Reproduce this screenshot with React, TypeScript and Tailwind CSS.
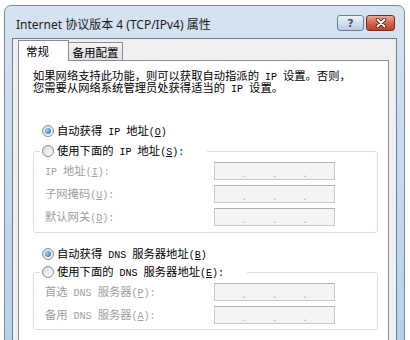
import React from 'react';

// ASCII runs use a narrow mono face (like SimSun half-width), CJK uses Noto
function Txt({ text }: { text: string }) {
  const parts = text.split(/([\x20-\x7e]+)/).filter(Boolean);
  return (
    <>
      {parts.map((p, i) =>
        /^[\x20-\x7e]+$/.test(p) ? (
          <span key={i} className="whitespace-pre font-['Liberation_Mono',monospace] text-[10px]">
            {p}
          </span>
        ) : (
          <span key={i}>{p}</span>
        )
      )}
    </>
  );
}

function Label({ text, k, colon }: { text: string; k: string; colon?: boolean }) {
  return (
    <span className="whitespace-nowrap">
      <Txt text={text} />
      <span className="font-['Liberation_Mono',monospace] text-[10px]">
        (<u>{k}</u>){colon ? ':' : ''}
      </span>
    </span>
  );
}

function Radio({ checked }: { checked?: boolean }) {
  return (
    <span className="flex h-[12px] w-[12px] shrink-0 items-center justify-center rounded-full border border-[#8c8c8c] bg-linear-to-br from-[#d9d9d9] to-[#fdfdfd]">
      {checked && (
        <span className="h-[6px] w-[6px] rounded-full bg-[radial-gradient(circle_at_35%_35%,#9ad6ff,#1d5fae)]" />
      )}
    </span>
  );
}

function IpBox() {
  return (
    <div className="flex h-[18px] w-[121px] items-center border border-[#c9c9c9] border-t-[#b0b0b0] bg-[#f4f4f4] px-px font-['Noto_Sans',sans-serif] text-[10px] leading-[12px] text-[#a8a8a8]">
      <span className="flex-1" />
      <span className="mt-[3px] w-[4px] text-center">.</span>
      <span className="flex-1" />
      <span className="mt-[3px] w-[4px] text-center">.</span>
      <span className="flex-1" />
      <span className="mt-[3px] w-[4px] text-center">.</span>
      <span className="flex-1" />
    </div>
  );
}

function FieldRow({ text, k, first }: { text: string; k: string; first?: boolean }) {
  return (
    <div className={`flex h-[18px] items-center ${first ? '' : 'mt-[5px]'}`}>
      <span className="w-[169px] text-[#a0a0a0]">
        <Label text={text} k={k} colon />
      </span>
      <IpBox />
    </div>
  );
}

export default function App() {
  return (
    <div className="h-[340px] w-[410px] overflow-hidden bg-white pl-[4px] pt-[5px] font-['Noto_Sans_CJK_SC',sans-serif]">
      <div className="flex h-[340px] w-[401px] flex-col rounded-t-[7px] border border-[#7b8a9a] bg-linear-to-b from-[#d6e3f1] to-[#b7d0ea]">
        {/* caption */}
        <div className="flex h-[32px] shrink-0 items-start pl-[11px] pr-[9px]">
          <span className="mt-[11px] whitespace-nowrap font-['Noto_Sans','Noto_Sans_CJK_SC',sans-serif] text-[12px] leading-[16px] text-[#1b1b1b]">
            Internet 协议版本 4 (TCP/IPv4) 属性
          </span>
          <div className="ml-auto mt-[9px] flex gap-[2px]">
            <div className="flex h-[16px] w-[27px] items-center justify-center rounded-[3px] border border-[#6d7f94] bg-linear-to-b from-[#eef3f9] via-[#d3dfed] to-[#bacce2] font-['DejaVu_Sans',sans-serif] text-[11px] leading-none font-bold text-[#44566c]">
              ?
            </div>
            <div className="flex h-[16px] w-[29px] items-center justify-center rounded-[3px] border border-[#7a2b22] bg-linear-to-b from-[#eaa99a] via-[#d4644f] to-[#c13e2b]">
              <svg width="12" height="10" viewBox="0 0 12 10">
                <path d="M2.5 1.5 L9.5 8.5 M9.5 1.5 L2.5 8.5" stroke="#4a1712" strokeWidth="3.6" strokeLinecap="round" />
                <path d="M2.5 1.5 L9.5 8.5 M9.5 1.5 L2.5 8.5" stroke="#ffffff" strokeWidth="1.9" strokeLinecap="round" />
              </svg>
            </div>
          </div>
        </div>

        {/* dialog face */}
        <div className="mx-[7px] flex flex-1 flex-col border border-[#6a7d91] bg-[#f0f0f0] pl-[5px] pr-[7px] pt-[1px]">
          {/* tabs */}
          <div className="flex items-end text-[11.5px] leading-[14px] text-black">
            <div className="relative z-10 -mb-px flex h-[21px] w-[51px] items-center border border-b-0 border-[#898c95] bg-white pl-[7px]">
              常规
            </div>
            <div className="flex h-[18px] w-[54px] items-center justify-center border border-b-0 border-l-0 border-[#898c95] bg-linear-to-b from-[#f4f4f4] to-[#e1e1e1]">
              备用配置
            </div>
          </div>

          {/* tab page */}
          <div className="flex flex-1 flex-col border border-[#898c95] bg-white pl-[14px] pr-[10px] pt-[8px] text-[11.3px] leading-[12px] text-black">
            <div className="h-[12px] whitespace-nowrap">
              <Txt text="如果网络支持此功能，则可以获取自动指派的 IP 设置。否则，" />
            </div>
            <div className="h-[12px] whitespace-nowrap">
              <Txt text="您需要从网络系统管理员处获得适当的 IP 设置。" />
            </div>

            <div className="ml-[9px] mt-[29px] flex h-[18px] items-center gap-[3px]">
              <Radio checked />
              <Label text="自动获得 IP 地址" k="O" />
            </div>

            <fieldset className="mt-[2px] w-[345px] rounded-[3px] border border-[#d9dfe4] pb-[6px] pl-[11px] pt-[2px]">
              <legend className="-ml-[5px] w-[167px] bg-white pl-[2px]">
                <div className="flex h-[18px] items-center gap-[3px]">
                  <Radio />
                  <Label text="使用下面的 IP 地址" k="S" colon />
                </div>
              </legend>
              <FieldRow text="IP 地址" k="I" first />
              <FieldRow text="子网掩码" k="U" />
              <FieldRow text="默认网关" k="D" />
            </fieldset>

            <div className="ml-[9px] mt-[12px] flex h-[18px] items-center gap-[3px]">
              <Radio checked />
              <Label text="自动获得 DNS 服务器地址" k="B" />
            </div>

            <fieldset className="w-[345px] rounded-[3px] border border-[#d9dfe4] pb-[5px] pl-[11px] pt-[2px]">
              <legend className="-ml-[5px] w-[207px] bg-white pl-[2px]">
                <div className="flex h-[18px] items-center gap-[3px]">
                  <Radio />
                  <Label text="使用下面的 DNS 服务器地址" k="E" colon />
                </div>
              </legend>
              <FieldRow text="首选 DNS 服务器" k="P" first />
              <FieldRow text="备用 DNS 服务器" k="A" />
            </fieldset>
          </div>
        </div>
      </div>
    </div>
  );
}
